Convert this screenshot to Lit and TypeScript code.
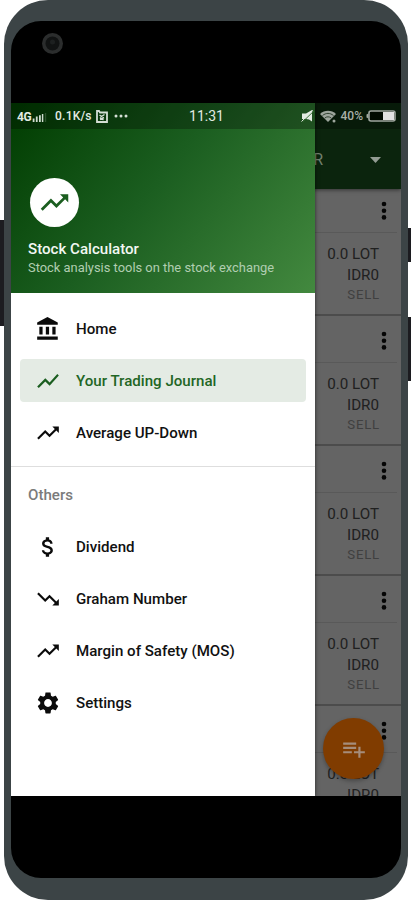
import { LitElement, html, css, svg } from "lit";
import { customElement } from "lit/decorators.js";
import { classMap } from "lit/directives/class-map.js";

const UP = "M16 6l2.29 2.29-4.88 4.88-4-4L2 16.59 3.41 18l6-6 4 4 6.3-6.29L22 12V6z";
const DOWN = "M16 18l2.29-2.29-4.88-4.88-4 4L2 7.41 3.41 6l6 6 4-4 6.3 6.29L22 12v6z";
const CHART = "M3.5 18.49l6-6.01 4 4L22 6.92l-1.41-1.41-7.09 7.97-4-4L2 16.99z";
const BANK = "M4 10v7h3v-7H4zm6 0v7h3v-7h-3zM2 22h19v-3H2v3zm14-12v7h3v-7h-3zM11.5 1L2 6v2h19V6l-9.5-5z";
const DOLLAR = "M11.8 10.9c-2.27-.59-3-1.2-3-2.15 0-1.09 1.01-1.85 2.7-1.85 1.78 0 2.44.85 2.5 2.1h2.21c-.07-1.72-1.12-3.3-3.21-3.81V3h-3v2.16c-1.94.42-3.5 1.68-3.5 3.61 0 2.31 1.91 3.46 4.7 4.13 2.5.6 3 1.48 3 2.41 0 .69-.49 1.79-2.7 1.79-2.06 0-2.87-.92-2.98-2.1h-2.2c.12 2.19 1.76 3.42 3.68 3.83V21h3v-2.15c1.95-.37 3.5-1.5 3.5-3.55 0-2.84-2.43-3.81-4.7-4.4z";
const GEAR = "M19.14 12.94c.04-.3.06-.61.06-.94 0-.32-.02-.64-.07-.94l2.03-1.58c.18-.14.23-.41.12-.61l-1.92-3.32c-.12-.22-.37-.29-.59-.22l-2.39.96c-.5-.38-1.03-.7-1.62-.94l-.36-2.54c-.04-.24-.24-.41-.48-.41h-3.84c-.24 0-.43.17-.47.41l-.36 2.54c-.59.24-1.13.57-1.62.94l-2.39-.96c-.22-.08-.47 0-.59.22L2.74 8.87c-.12.21-.08.47.12.61l2.03 1.58c-.05.3-.09.63-.09.94s.02.64.07.94l-2.03 1.58c-.18.14-.23.41-.12.61l1.92 3.32c.12.22.37.29.59.22l2.39-.96c.5.38 1.03.7 1.62.94l.36 2.54c.05.24.24.41.48.41h3.84c.24 0 .44-.17.47-.41l.36-2.54c.59-.24 1.13-.56 1.62-.94l2.39.96c.22.08.47 0 .59-.22l1.92-3.32c.12-.22.07-.47-.12-.61l-2.01-1.58zM12 15.6c-1.98 0-3.6-1.62-3.6-3.6s1.62-3.6 3.6-3.6 3.6 1.62 3.6 3.6-1.62 3.6-3.6 3.6z";

interface Item { icon: string; label: string; active?: boolean }
const MAIN: Item[] = [
  { icon: BANK, label: "Home" },
  { icon: CHART, label: "Your Trading Journal", active: true },
  { icon: UP, label: "Average UP-Down" },
];
const OTHERS: Item[] = [
  { icon: DOLLAR, label: "Dividend" },
  { icon: DOWN, label: "Graham Number" },
  { icon: UP, label: "Margin of Safety (MOS)" },
  { icon: GEAR, label: "Settings" },
];

const icon = (d: string) => html`<svg class="icon" viewBox="0 0 24 24">${svg`<path d=${d} />`}</svg>`;

@customElement("status-bar")
class StatusBar extends LitElement {
  static styles = css`
    :host { display: flex; align-items: center; height: 26px; padding: 0 5px 0 6px; box-sizing: border-box;
      background: rgba(0, 0, 0, 0.28); color: #e3ebe3; font: 500 12px Roboto, sans-serif; }
    .side { flex: 1; display: flex; align-items: center; }
    .right { justify-content: flex-end; }
    .net { font-size: 12px; font-weight: 700; letter-spacing: -0.5px; padding-top: 2px; }
    .bars { width: 16px; height: 9px; margin: 2px 8px 0 0; }
    .rate { letter-spacing: 0.2px; }
    .card { width: 12px; height: 13px; margin: 0 6px 0 4px; }
    .more { width: 14px; height: 4px; }
    .time { font-size: 14px; font-weight: 400; letter-spacing: 0; }
    .mute { width: 13px; height: 12px; margin-right: 6px; }
    .wifi { width: 17px; height: 13px; margin-right: 4px; }
    .dim { color: #a9b0a9; font-size: 12px; }
    .battery { width: 30px; height: 12px; margin-left: 3px; }
  `;
  render() {
    return html`
      <div class="side">
        <span class="net">4G</span>
        <svg class="bars" viewBox="0 0 16 10" fill="#cfdccf"><path d="M1 6h2v4H1zM4.500 4h2v6h-2zM8 2.500h2V10H8zM11.200 1h1.600v9h-1.600z"/><path opacity=".2" d="M14.500 0h1.500v10h-1.500z"/></svg>
        <span class="rate">0.1K/s</span>
        <svg class="card" viewBox="0 0 12 13" fill="none" stroke="#d5ded5"><path stroke-width="1.800" d="M3 1H1v11h10V2.500H4z"/><path stroke-width="1.400" d="M3.500 5l2 1.500L8.500 4.500M4 9.500l4-2M4 7.500l3.500 2.500"/></svg>
        <svg class="more" viewBox="0 0 14 4" fill="#d5ded5"><circle cx="2" cy="2" r="1.500"/><circle cx="7" cy="2" r="1.500"/><circle cx="12" cy="2" r="1.500"/></svg>
      </div>
      <span class="time">11:31</span>
      <div class="side right">
        <svg class="mute" viewBox="0 0 13 12" fill="#e3ebe3"><path d="M1 3.500h4L11 0v11.500L8 9.500 5 9H1z"/><path d="M1.500 12L13 .8" stroke="#30682f" stroke-width="1"/><path d="M.5 11.500L12 .3" stroke="#e3ebe3"/></svg>
        <svg class="wifi" viewBox="0 0 17 13"><path d="M0 4C4.500-.3 11.500-.3 16 4l-8 8z" fill="#9da69d"/><path d="M2.500 5.500c3.500-2.800 7.500-2.800 11 0M4.800 8c2-1.600 4.400-1.600 6.400 0" stroke="#152a15" fill="none" stroke-width=".8"/><circle cx="14" cy="11" r="1.500" fill="#9da69d"/></svg>
        <span class="dim">40%</span>
        <svg class="battery" viewBox="0 0 30 12"><rect x="3" y="1" width="26" height="10" rx="2" fill="#000a00" stroke="#a0a8a0" stroke-width="1.600"/><path d="M2.500 3.500v5L.500 7.500v-3z" fill="#a0a8a0"/><path d="M17 2h11v8H17z" fill="#e2e2e2"/></svg>
      </div>`;
  }
}

@customElement("nav-drawer")
class NavDrawer extends LitElement {
  static styles = css`
    :host { display: flex; flex-direction: column; background: #fff; font-family: Roboto, sans-serif; }
    .head { height: 190px; box-sizing: border-box; padding: 75px 17px 0; color: #f3f8f3;
      background: linear-gradient(130deg, #003c00 0%, #1b5e20 46%, #43893f 100%); }
    .logo { width: 49px; height: 49px; margin-left: 2px; border-radius: 50%; background: #fff; display: flex; align-items: center; justify-content: center; }
    .logo .icon { width: 33px; height: 33px; fill: #1b5e20; }
    .title { margin-top: 12px; font-size: 15.1px; line-height: 20px; font-weight: 500; white-space: nowrap; }
    .sub { font-size: 12.9px; line-height: 18px; color: #b1ceb1; white-space: nowrap; }
    .icon { display: block; width: 26px; height: 26px; flex: none; fill: #0b0b0b; }
    .list { display: flex; flex-direction: column; gap: 9px; padding: 14px 9px 0; }
    .item { height: 43px; box-sizing: border-box; display: flex; align-items: center; gap: 15px; padding-left: 15px;
      border-radius: 4px; font-size: 15.1px; font-weight: 500; color: #111; white-space: nowrap; }
    .active { background: #e4ebe4; color: #1f6624; }
    .active .icon { fill: #1b5e20; }
    .rule { height: 1px; margin-top: 12px; background: #dedede; }
    .label { padding: 19px 17px 0; font-size: 15.1px; line-height: 19px; font-weight: 500; color: #7b7b7b; }
    .others { padding-top: 20px; }
  `;
  private item(i: Item) {
    return html`<div class=${classMap({ item: true, active: !!i.active })}>${icon(i.icon)}<span>${i.label}</span></div>`;
  }
  render() {
    return html`
      <div class="head">
        <div class="logo">${icon(UP)}</div>
        <div class="title">Stock Calculator</div>
        <div class="sub">Stock analysis tools on the stock exchange</div>
      </div>
      <div class="list">${MAIN.map((i) => this.item(i))}</div>
      <div class="rule"></div>
      <div class="label">Others</div>
      <div class="list others">${OTHERS.map((i) => this.item(i))}</div>`;
  }
}

@customElement("journal-page")
class JournalPage extends LitElement {
  static styles = css`
    :host { display: flex; flex-direction: column; background: #646464; font-family: Roboto, sans-serif; }
    .bar { height: 86px; flex: none; box-sizing: border-box; padding: 27px 20px 0 0; display: flex; align-items: center; justify-content: flex-end;
      gap: 47px; background: #0b240d; color: #71806f; font-size: 16px; position: relative; box-shadow: 0 1px 4px rgba(0,0,0,.5); }
    .caret { width: 11px; height: 6px; fill: #939c93; }
    .cards { margin-top: -3px; }
    .card { height: 130px; box-sizing: border-box; border-bottom: 2px solid #4c4c4c; }
    .top { height: 47px; box-sizing: border-box; margin-right: 4px; border-bottom: 1px solid #595959; display: flex; justify-content: flex-end; padding: 15px 10px 0 0; }
    .dots { width: 6px; height: 20px; fill: #050505; }
    .vals { display: flex; flex-direction: column; align-items: flex-end; padding: 11px 22px 0 0; font-size: 15.2px; line-height: 21px; color: #202020; }
    .sell { font-size: 13.2px; line-height: 18px; letter-spacing: 0.8px; margin-right: -1px; color: #404040; }
  `;
  render() {
    return html`
      <div class="bar"><span>R</span><svg class="caret" viewBox="0 0 12 6" preserveAspectRatio="none"><path d="M0 0h12L6 6z"/></svg></div>
      <div class="cards">
        ${[0, 1, 2, 3, 4].map(() => html`
          <div class="card">
            <div class="top"><svg class="dots" viewBox="0 0 6 20"><circle cx="3" cy="3" r="2.300"/><circle cx="3" cy="9.700" r="2.300"/><circle cx="3" cy="16.400" r="2.300"/></svg></div>
            <div class="vals"><span>0.0 LOT</span><span>IDR0</span><span class="sell">SELL</span></div>
          </div>`)}
      </div>`;
  }
}

@customElement("app-root")
class AppRoot extends LitElement {
  static styles = css`
    :host { display: block; position: relative; width: 411px; height: 900px; overflow: hidden; background: #fff; }
    .key { position: absolute; width: 12px; background: #1c1c20; }
    .left { left: 0; top: 220px; height: 106px; }
    .r1 { right: 0; top: 228px; height: 34px; }
    .r2 { right: 0; top: 317px; height: 64px; }
    .phone { position: relative; box-sizing: border-box; width: 404px; height: 900px; margin-left: 4px; padding: 21px 7px 22px; border-radius: 44px; background: #3c4446; }
    .glass { height: 857px; box-sizing: border-box; padding-top: 82px; border-radius: 30px; background: #000; overflow: hidden; }
    .cam { position: absolute; left: 38px; top: 33px; width: 21px; height: 21px; }
    .screen { position: relative; height: 693px; overflow: hidden; }
    journal-page { height: 693px; }
    nav-drawer { position: absolute; left: 0; top: 0; width: 304px; height: 693px; box-shadow: 0 0 4px rgba(0,0,0,.6); }
    status-bar { position: absolute; left: 0; right: 0; top: 0; }
    .fab { position: absolute; left: 312px; top: 615px; width: 61px; height: 61px; border-radius: 50%; background: #803c00;
      box-shadow: 0 2px 4px rgba(0,0,0,.3); display: flex; align-items: center; justify-content: center; }
    .fab svg { width: 26px; height: 26px; fill: #a58d7b; }
  `;
  render() {
    return html`
      <div class="key left"></div><div class="key r1"></div><div class="key r2"></div>
      <div class="phone">
        <div class="glass">
          <div class="screen">
            <journal-page></journal-page>
            <div class="fab"><svg viewBox="0 0 24 24"><path d="M14 10H2v2h12v-2zm0-4H2v2h12V6zm4 8v-4h-2v4h-4v2h4v4h2v-4h4v-2h-4zM2 16h8v-2H2v2z"/></svg></div>
            <nav-drawer></nav-drawer>
            <status-bar></status-bar>
          </div>
        </div>
        <svg class="cam" viewBox="0 0 21 21"><circle cx="10.500" cy="10.500" r="10.500" fill="#2b2d2d"/><circle cx="10.500" cy="10.500" r="7" fill="#111313"/><circle cx="10.500" cy="9" r="2.500" fill="#1d2020"/></svg>
      </div>`;
  }
}
